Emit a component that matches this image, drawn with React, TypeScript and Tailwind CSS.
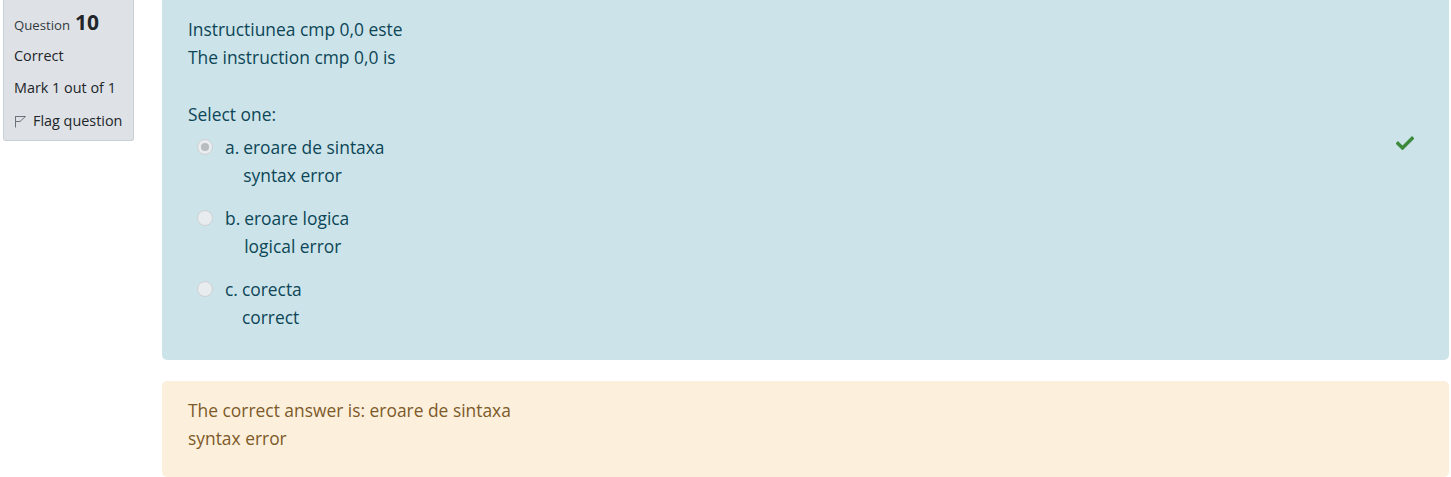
import React from 'react';

const options = [
  { letter: 'a.', ro: 'eroare de sintaxa', en: 'syntax error', checked: true },
  { letter: 'b.', ro: 'eroare logica', en: 'logical error', checked: false },
  { letter: 'c.', ro: 'corecta', en: 'correct', checked: false },
];

const App: React.FC = () => {
  return (
    <div className="flex w-[1451px] h-[477px] overflow-hidden bg-white font-['Open_Sans',sans-serif] text-[#212529]">
      {/* Info panel */}
      <div className="ml-[3px] mt-0 h-[141px] w-[131px] shrink-0 rounded-b-[3px] border border-t-0 border-[#cad0d7] bg-[#dee2e6] px-[10px] pt-[10px] text-[14.4px]">
        <div className="flex items-baseline gap-[5px] leading-[24px]">
          <span className="text-[13.2px] text-[#343a40]">Question</span>
          <span className="text-[21px] font-bold">10</span>
        </div>
        <div className="mt-[9px] leading-[20px]">Correct</div>
        <div className="mt-[12px] leading-[20px]">Mark 1 out of 1</div>
        <div className="mt-[13px] flex items-center gap-[6px] leading-[20px]">
          <svg width="13" height="13" viewBox="0 0 13 13" fill="none" stroke="#6a737b" strokeWidth="1">
            <path d="M1.5 1 L1.5 12.5" />
            <path d="M1.5 1.5 L11.5 1.5 L6 6.5 L1.5 6.5" />
          </svg>
          <span>Flag question</span>
        </div>
      </div>

      {/* Main column */}
      <div className="ml-[28px] mr-[2px] flex flex-1 flex-col gap-[21px]">
        <div className="relative h-[360px] rounded-b-[5px] bg-[#cce4e9] pl-[26px] pt-[15px] text-[17.4px] leading-[28px] text-[#0c4657]">
          <div>Instructiunea cmp 0,0 este</div>
          <div>The instruction cmp 0,0 is</div>
          <div className="mt-[29px]">Select one:</div>
          <div className="mt-[5px] flex flex-col gap-[15px]">
            {options.map((o) => (
              <div key={o.letter} className="flex items-start pl-[9px]">
                <span className="mr-[12px] mt-[6px] flex h-[16px] w-[16px] shrink-0 items-center justify-center rounded-full border border-[#cdd0d2] bg-[#e9ecef]">
                  {o.checked && <span className="h-[8px] w-[8px] rounded-full bg-[#b8bcbf]" />}
                </span>
                <span className="mr-[4px]">{o.letter}</span>
                <div>
                  <div>{o.ro}</div>
                  <div>{o.en}</div>
                </div>
              </div>
            ))}
          </div>
          <svg className="absolute left-[1234px] top-[136px]" width="18" height="14" viewBox="0 0 18 14">
            <path d="M2 7.5 L6.5 12 L16 2.5" fill="none" stroke="#3b8a3b" strokeWidth="3.4" strokeLinecap="square" />
          </svg>
        </div>

        <div className="h-[96px] rounded-[5px] bg-[#fcefdc] pl-[26px] pt-[15px] text-[17.4px] leading-[28px] text-[#7d5a29]">
          <div>The correct answer is: eroare de sintaxa</div>
          <div>syntax error</div>
        </div>
      </div>
    </div>
  );
};

export default App;
